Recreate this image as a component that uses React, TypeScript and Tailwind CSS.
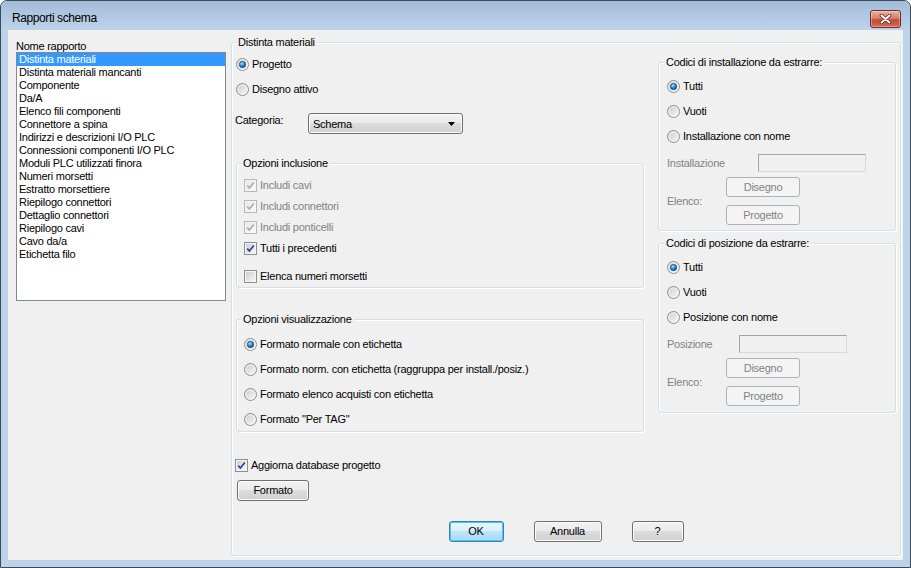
import React from 'react';

const reports = [
  'Distinta materiali',
  'Distinta materiali mancanti',
  'Componente',
  'Da/A',
  'Elenco fili componenti',
  'Connettore a spina',
  'Indirizzi e descrizioni I/O PLC',
  'Connessioni componenti I/O PLC',
  'Moduli PLC utilizzati finora',
  'Numeri morsetti',
  'Estratto morsettiere',
  'Riepilogo connettori',
  'Dettaglio connettori',
  'Riepilogo cavi',
  'Cavo da/a',
  'Etichetta filo',
];

const RadioGlyph = ({ checked }: { checked?: boolean }) => (
  <svg width="13" height="13" viewBox="0 0 13 13" className="shrink-0">
    <defs>
      <linearGradient id="rbOuter" x1="0" y1="0" x2="1" y2="1">
        <stop offset="0" stopColor="#c9c9c9" />
        <stop offset="1" stopColor="#fbfbfb" />
      </linearGradient>
      <radialGradient id="rbDot" cx="0.4" cy="0.35" r="0.75">
        <stop offset="0" stopColor="#b6e6fc" />
        <stop offset="0.45" stopColor="#2f8ad6" />
        <stop offset="1" stopColor="#0c3a72" />
      </radialGradient>
    </defs>
    <circle cx="6.5" cy="6.5" r="6" fill="url(#rbOuter)" stroke="#8e8f8f" />
    <circle cx="6.5" cy="6.5" r="4.6" fill="none" stroke="#f6f6f6" strokeWidth="0.9" />
    {checked && <circle cx="6.5" cy="6.5" r="3.2" fill="url(#rbDot)" stroke="#1d4f80" strokeWidth="0.7" />}
  </svg>
);

const CheckGlyph = ({ checked, disabled }: { checked?: boolean; disabled?: boolean }) => (
  <svg width="13" height="13" viewBox="0 0 13 13" className="shrink-0">
    <defs>
      <linearGradient id="cbIn" x1="0" y1="0" x2="1" y2="1">
        <stop offset="0" stopColor="#cbcfd5" />
        <stop offset="1" stopColor="#f7f7f7" />
      </linearGradient>
      <linearGradient id="cbInDis" x1="0" y1="0" x2="1" y2="1">
        <stop offset="0" stopColor="#e6e6e6" />
        <stop offset="1" stopColor="#fafafa" />
      </linearGradient>
    </defs>
    <rect x="0.5" y="0.5" width="12" height="12" fill="#f4f4f4" stroke={disabled ? '#b8b8b8' : '#8e8f8f'} />
    <rect x="2" y="2" width="9" height="9" fill={disabled ? 'url(#cbInDis)' : 'url(#cbIn)'} />
    {checked && (
      <path
        d="M3.3 6.6 L5.4 9 L9.8 3.4"
        fill="none"
        stroke={disabled ? '#a9a9a9' : '#2c3f86'}
        strokeWidth="1.6"
      />
    )}
  </svg>
);

const Radio = ({ label, checked }: { label: string; checked?: boolean }) => (
  <div className="flex items-center h-[13px] gap-[3px]">
    <RadioGlyph checked={checked} />
    <span>{label}</span>
  </div>
);

const Check = ({ label, checked, disabled }: { label: string; checked?: boolean; disabled?: boolean }) => (
  <div className={`flex items-center h-[13px] gap-[3px] ${disabled ? 'text-[#838383]' : ''}`}>
    <CheckGlyph checked={checked} disabled={disabled} />
    <span>{label}</span>
  </div>
);

const Button = ({ label, className = '', disabled, primary }: { label: string; className?: string; disabled?: boolean; primary?: boolean }) => {
  let look =
    'border-[#707070] bg-[linear-gradient(to_bottom,#f2f2f2_0%,#ebebeb_49%,#dddddd_50%,#cfcfcf_100%)] shadow-[inset_0_0_0_1px_#fcfcfc]';
  if (disabled) look = 'border-[#adb2b5] bg-[#f4f4f4] text-[#838383]';
  if (primary)
    look =
      'border-[#3c7fb1] bg-[linear-gradient(to_bottom,#eaf6fd_0%,#d9f0fc_49%,#bee6fd_50%,#a7d9f5_100%)] shadow-[inset_0_0_0_1px_#48c6f5]';
  return <div className={`rounded-[3px] border flex items-center justify-center ${look} ${className}`}>{label}</div>;
};

const Group = ({ title, className = '', legendClass = 'ml-[4px]', children }: { title: string; className?: string; legendClass?: string; children?: React.ReactNode }) => (
  <fieldset className={`rounded-[3px] border border-[#d5dfe5] shadow-[inset_1px_1px_0_#ffffff,1px_1px_0_#ffffff] ${className}`}>
    <legend className={`px-[2px] leading-[13px] bg-[#f0f0f0] ${legendClass}`}>{title}</legend>
    {children}
  </fieldset>
);

const CodesGroup = ({ title, named, field, fieldLabelW, className }: { title: string; named: string; field: string; fieldLabelW: string; className: string }) => (
  <Group title={title} legendClass="ml-[5px]" className={className}>
    <div className="pl-[8px]">
      <div className="mt-[11px]">
        <Radio label="Tutti" checked />
      </div>
      <div className="mt-[12px]">
        <Radio label="Vuoti" />
      </div>
      <div className="mt-[12px]">
        <Radio label={named} />
      </div>
      <div className="mt-[11px] flex items-center h-[18px]">
        <span className={`text-[#838383] ${fieldLabelW}`}>{field}</span>
        <div className="w-[108px] h-[18px] border border-[#a3a3a3] border-b-[#d9d9d9] border-r-[#d9d9d9] bg-[#f0f0f0]" />
      </div>
      <div className="mt-[5px] flex">
        <span className="w-[59px] self-center text-[#838383]">Elenco:</span>
        <div className="flex flex-col gap-[8px]">
          <Button label="Disegno" disabled className="w-[74px] h-[20px]" />
          <Button label="Progetto" disabled className="w-[74px] h-[20px]" />
        </div>
      </div>
    </div>
  </Group>
);

export default function App() {
  return (
    <div className="w-[911px] h-[568px] rounded-t-[7px] border border-[#3d4a5a] bg-[#bcd3ea] flex flex-col overflow-hidden font-['Liberation_Sans',Arial,sans-serif] text-[11px] leading-[13px] tracking-[-0.25px] text-black">
      <div className="h-[29px] shrink-0 flex items-start bg-[linear-gradient(to_bottom,#a5bcd9_0%,#b3cae4_60%,#bcd3ea_100%)]">
        <span className="ml-[11px] mt-[10px] text-[12px] leading-[15px] tracking-[-0.4px]">Rapporti schema</span>
        <div className="ml-auto mr-[9px] mt-[9px] w-[31px] h-[18px] rounded-[3px] border border-[#6b2a22] bg-[linear-gradient(to_bottom,#eab0a2_0%,#d8806c_45%,#c64a32_55%,#cf6a52_100%)] shadow-[inset_0_0_0_1px_rgba(255,255,255,0.35)] flex items-center justify-center">
          <svg width="13" height="10" viewBox="0 0 13 10">
            <path d="M2.5 1.5 L10.5 8.5 M10.5 1.5 L2.5 8.5" stroke="#5b2820" strokeWidth="3.6" strokeLinecap="round" />
            <path d="M2.5 1.5 L10.5 8.5 M10.5 1.5 L2.5 8.5" stroke="#ffffff" strokeWidth="2" strokeLinecap="round" />
          </svg>
        </div>
      </div>

      <div className="mx-[7px] h-[530px] shrink-0 bg-[#f0f0f0] flex">
        <div className="w-[223px] shrink-0 pl-[8px] pt-[10px]">
          <div className="leading-[12px]">Nome rapporto</div>
          <div className="w-[210px] h-[249px] border border-[#828790] bg-white">
            {reports.map((r, i) => (
              <div key={r} className={`h-[13px] leading-[13px] pl-[2px] whitespace-nowrap ${i === 0 ? 'bg-[#3399ff] text-white' : ''}`}>
                {r}
              </div>
            ))}
          </div>
        </div>

        <Group title="Distinta materiali" className="mt-[6px] w-[670px] h-[520px] shrink-0">
          <div className="flex">
            <div className="w-[412px] shrink-0">
              <div className="mt-[9px] ml-[4px]">
                <Radio label="Progetto" checked />
              </div>
              <div className="mt-[12px] ml-[4px]">
                <Radio label="Disegno attivo" />
              </div>
              <div className="mt-[17px] ml-[3px] flex items-start">
                <span className="w-[73px] mt-[1px]">Categoria:</span>
                <div className="w-[155px] h-[21px] rounded-[3px] border border-[#707070] bg-[linear-gradient(to_bottom,#f2f2f2_0%,#ebebeb_49%,#dddddd_50%,#cfcfcf_100%)] shadow-[inset_0_0_0_1px_#fcfcfc] flex items-center pl-[4px] pr-[7px] pt-[1px]">
                  <span>Schema</span>
                  <svg width="7" height="4" viewBox="0 0 7 4" className="ml-auto">
                    <path d="M0 0 H7 L3.5 4 Z" fill="#000" />
                  </svg>
                </div>
              </div>

              <Group title="Opzioni inclusione" className="mt-[23px] ml-[4px] w-[408px] h-[131px]">
                <div className="pl-[7px]">
                  <div className="mt-[9px]">
                    <Check label="Includi cavi" checked disabled />
                  </div>
                  <div className="mt-[8px]">
                    <Check label="Includi connettori" checked disabled />
                  </div>
                  <div className="mt-[8px]">
                    <Check label="Includi ponticelli" checked disabled />
                  </div>
                  <div className="mt-[8px]">
                    <Check label="Tutti i precedenti" checked />
                  </div>
                  <div className="mt-[15px]">
                    <Check label="Elenca numeri morsetti" />
                  </div>
                </div>
              </Group>

              <Group title="Opzioni visualizzazione" className="mt-[25px] ml-[4px] w-[408px] h-[119px]">
                <div className="pl-[7px]">
                  <div className="mt-[12px]">
                    <Radio label="Formato normale con etichetta" checked />
                  </div>
                  <div className="mt-[12px]">
                    <Radio label="Formato norm. con etichetta (raggruppa per install./posiz.)" />
                  </div>
                  <div className="mt-[12px]">
                    <Radio label="Formato elenco acquisti con etichetta" />
                  </div>
                  <div className="mt-[12px]">
                    <Radio label={'Formato "Per TAG"'} />
                  </div>
                </div>
              </Group>

              <div className="mt-[27px] ml-[3px]">
                <Check label="Aggiorna database progetto" checked />
              </div>
              <Button label="Formato" className="mt-[8px] ml-[5px] w-[72px] h-[21px]" />
            </div>

            <div className="ml-[14px] w-[238px] shrink-0">
              <CodesGroup
                title="Codici di installazione da estrarre:"
                named="Installazione con nome"
                field="Installazione"
                fieldLabelW="w-[91px]"
                className="mt-[7px] w-[238px] h-[175px]"
              />
              <CodesGroup
                title="Codici di posizione da estrarre:"
                named="Posizione con nome"
                field="Posizione"
                fieldLabelW="w-[72px]"
                className="mt-[6px] w-[238px] h-[176px]"
              />
            </div>
          </div>

          <div className="mt-[20px] flex justify-center gap-[30px]">
            <Button label="OK" primary className="w-[55px] h-[21px]" />
            <Button label="Annulla" className="w-[68px] h-[21px]" />
            <Button label="?" className="w-[52px] h-[21px]" />
          </div>
        </Group>
      </div>
    </div>
  );
}
